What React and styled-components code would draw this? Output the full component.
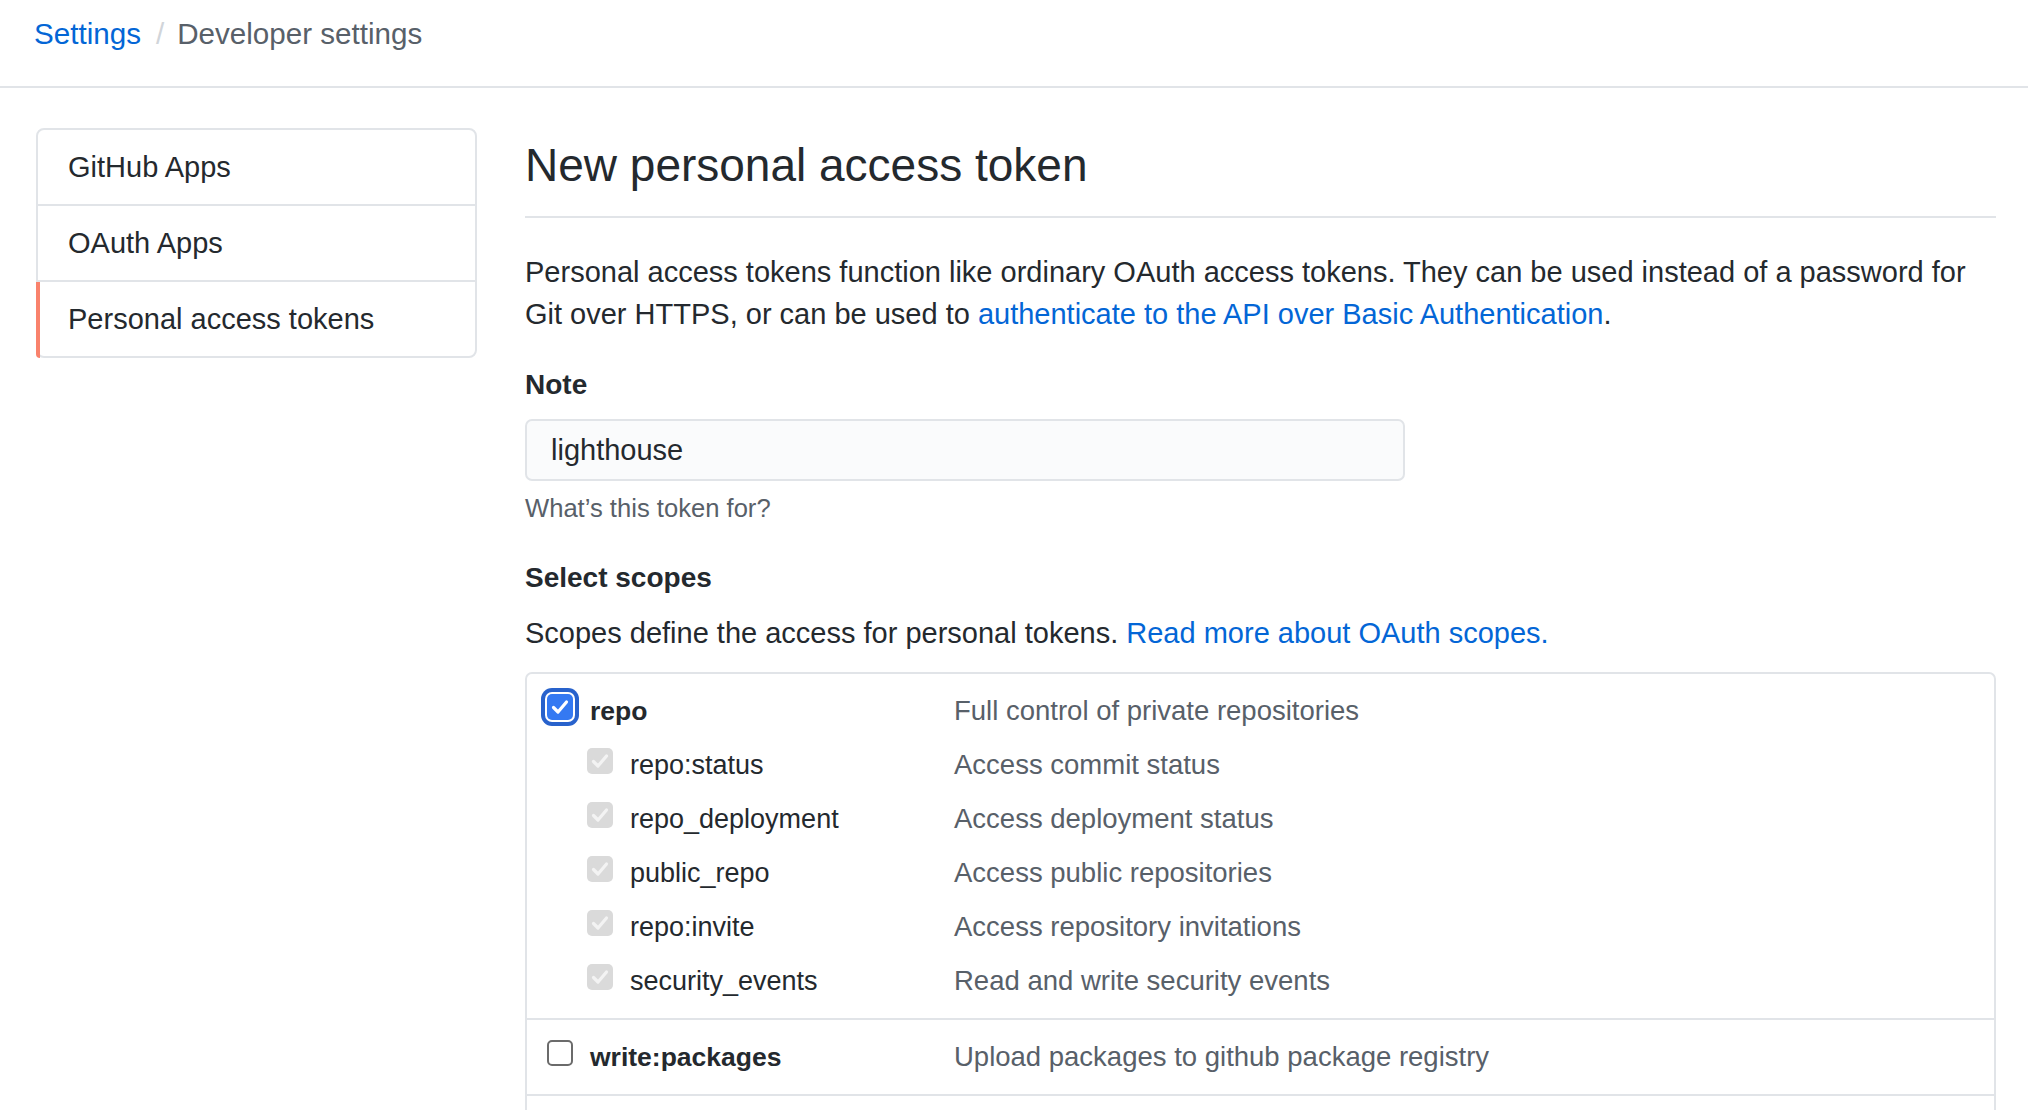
import React from 'react';
import styled, { createGlobalStyle, css } from 'styled-components';

const GlobalStyle = createGlobalStyle`
  html, body { margin: 0; padding: 0; background: #ffffff; }
  body {
    font-family: "Liberation Sans", Arial, Helvetica, sans-serif;
    color: #24292e;
  }
  * { box-sizing: border-box; }
`;

const Header = styled.header`
  padding: 13px 32px 31px 34px;
  border-bottom: 2px solid #e1e4e8;
`;

const Breadcrumb = styled.nav`
  display: flex;
  align-items: center;
  font-size: 29.6px;
  line-height: 42px;
`;

const Crumb = styled.a`
  color: #0366d6;
  text-decoration: none;
`;

const Sep = styled.span`
  color: #d1d5da;
  margin: 0 13px 0 15px;
`;

const Current = styled.span`
  color: #586069;
`;

const Page = styled.div`
  display: flex;
  align-items: flex-start;
  gap: 48px;
  padding: 40px 32px 0 36px;
`;

const SideNav = styled.nav`
  flex: none;
  width: 441px;
  border: 2px solid #e1e4e8;
  border-radius: 8px;
`;

const NavItem = styled.a`
  position: relative;
  display: flex;
  align-items: center;
  height: 76px;
  padding-left: 30px;
  font-size: 29px;
  color: #24292e;
  text-decoration: none;
  border-bottom: 2px solid #e1e4e8;
  &:last-child {
    border-bottom: none;
    height: 74px;
  }
  ${(p) =>
    p.$selected &&
    css`
      &::before {
        content: '';
        position: absolute;
        left: -2px;
        top: 0;
        bottom: -2px;
        width: 4px;
        background: #f9826c;
        border-bottom-left-radius: 8px;
      }
    `}
`;

const Main = styled.main`
  flex: 1;
  min-width: 0;
  padding-top: 7px;
`;

const Subhead = styled.div`
  padding-bottom: 21px;
  border-bottom: 2px solid #e1e4e8;
  margin-bottom: 33px;
`;

const Title = styled.h2`
  margin: 0;
  font-size: 46px;
  line-height: 60px;
  font-weight: 400;
  color: #24292e;
`;

const Text = styled.p`
  margin: ${(p) => p.$mt || 0}px 0 0;
  font-size: 29px;
  line-height: 42px;
  color: #24292e;
`;

const Link = styled.a`
  color: #0366d6;
  text-decoration: none;
`;

const Label = styled.div`
  margin-top: ${(p) => p.$mt}px;
  font-size: 28px;
  line-height: 42px;
  font-weight: 700;
  color: #24292e;
`;

const Input = styled.input`
  display: block;
  margin-top: 13px;
  width: 880px;
  height: 62px;
  padding: 0 24px;
  font-family: "Liberation Sans", Arial, Helvetica, sans-serif;
  font-size: 29px;
  color: #24292e;
  background: #fafbfc;
  border: 2px solid #e1e4e8;
  border-radius: 7px;
  outline: none;
`;

const Hint = styled.div`
  margin-top: 8px;
  font-size: 25.6px;
  line-height: 38px;
  color: #586069;
`;

const ScopeBox = styled.div`
  margin-top: 18px;
  border: 2px solid #e1e4e8;
  border-radius: 7px;
`;

const Group = styled.div`
  padding: 10px 0;
  & + & {
    border-top: 2px solid #e1e4e8;
  }
`;

const Row = styled.div`
  display: grid;
  grid-template-columns: 407px 1fr;
  align-items: center;
  height: 54px;
  padding-left: 20px;
`;

const NameCell = styled.label`
  display: flex;
  align-items: center;
  gap: 17px;
  padding-left: ${(p) => (p.$child ? 40 : 0)}px;
  font-size: ${(p) => (p.$child ? 27 : 26.5)}px;
  font-weight: ${(p) => (p.$child ? 400 : 700)};
  color: #24292e;
`;

const Desc = styled.div`
  font-size: 27.5px;
  color: #586069;
`;

const Check = styled.span`
  flex: none;
  display: inline-flex;
  align-items: center;
  justify-content: center;
  width: 26px;
  height: 26px;
  border-radius: 5px;
  margin-bottom: 8px;
  ${(p) =>
    p.$state === 'checked' &&
    css`
      background: #3479f2;
      box-shadow: 0 0 0 2px #ffffff, 0 0 0 6px #2862cc;
    `}
  ${(p) =>
    p.$state === 'disabled' &&
    css`
      background: #dadada;
    `}
  ${(p) =>
    p.$state === 'unchecked' &&
    css`
      background: #ffffff;
      border: 2px solid #6b6b6b;
    `}
`;

function Checkbox({ state }) {
  return (
    <Check $state={state}>
      {state !== 'unchecked' && (
        <svg width="26" height="26" viewBox="0 0 26 26">
          <path
            d="M6.5 13.5 L11 18 L19.5 8"
            fill="none"
            stroke={state === 'checked' ? '#ffffff' : '#f3f3f3'}
            strokeWidth="3.2"
            strokeLinecap="round"
            strokeLinejoin="round"
          />
        </svg>
      )}
    </Check>
  );
}

const scopes = [
  {
    name: 'repo',
    desc: 'Full control of private repositories',
    checked: true,
    children: [
      ['repo:status', 'Access commit status'],
      ['repo_deployment', 'Access deployment status'],
      ['public_repo', 'Access public repositories'],
      ['repo:invite', 'Access repository invitations'],
      ['security_events', 'Read and write security events'],
    ],
  },
  { name: 'write:packages', desc: 'Upload packages to github package registry', children: [] },
  { name: 'read:packages', desc: 'Download packages from github package registry', children: [] },
  { name: 'delete:packages', desc: 'Delete packages from github package registry', children: [] },
];

export default function App() {
  return (
    <>
      <GlobalStyle />
      <Header>
        <Breadcrumb>
          <Crumb href="#">Settings</Crumb>
          <Sep>/</Sep>
          <Current>Developer settings</Current>
        </Breadcrumb>
      </Header>
      <Page>
        <SideNav>
          <NavItem href="#">GitHub Apps</NavItem>
          <NavItem href="#">OAuth Apps</NavItem>
          <NavItem href="#" $selected>
            Personal access tokens
          </NavItem>
        </SideNav>
        <Main>
          <Subhead>
            <Title>New personal access token</Title>
          </Subhead>
          <Text>
            Personal access tokens function like ordinary OAuth access tokens. They can be used instead of a
            password for Git over HTTPS, or can be used to{' '}
            <Link href="#">authenticate to the API over Basic Authentication</Link>.
          </Text>
          <Label $mt={29}>Note</Label>
          <Input defaultValue="lighthouse" readOnly />
          <Hint>What’s this token for?</Hint>
          <Label $mt={30}>Select scopes</Label>
          <Text $mt={13}>
            Scopes define the access for personal tokens. <Link href="#">Read more about OAuth scopes.</Link>
          </Text>
          <ScopeBox>
            {scopes.map((g) => (
              <Group key={g.name}>
                <Row>
                  <NameCell>
                    <Checkbox state={g.checked ? 'checked' : 'unchecked'} />
                    {g.name}
                  </NameCell>
                  <Desc>{g.desc}</Desc>
                </Row>
                {g.children.map(([n, d]) => (
                  <Row key={n}>
                    <NameCell $child>
                      <Checkbox state={g.checked ? 'disabled' : 'unchecked'} />
                      {n}
                    </NameCell>
                    <Desc>{d}</Desc>
                  </Row>
                ))}
              </Group>
            ))}
          </ScopeBox>
        </Main>
      </Page>
    </>
  );
}
